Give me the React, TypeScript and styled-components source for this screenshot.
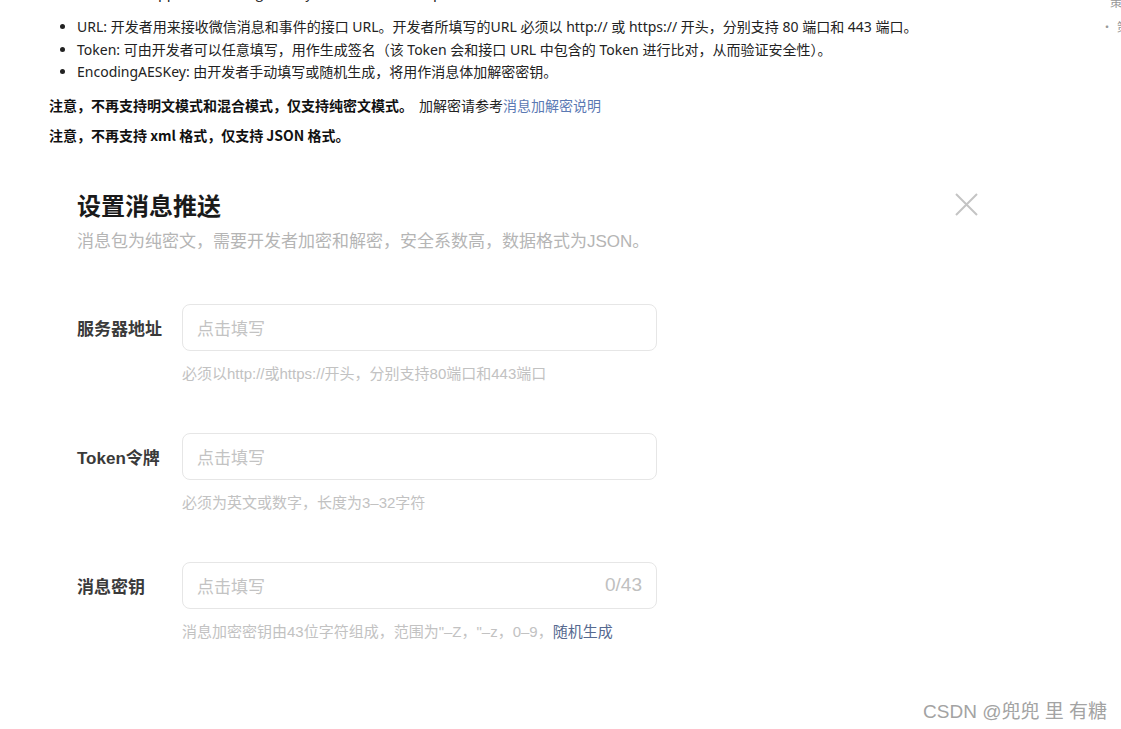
import styled, { createGlobalStyle } from 'styled-components'

const GlobalStyle = createGlobalStyle`
  html, body {
    margin: 0;
    padding: 0;
    background: #fff;
    overflow: hidden;
  }
  body {
    font-family: "Noto Sans CJK SC", sans-serif;
    color: #222;
  }
`

const Page = styled.div`
  position: relative;
  display: flex;
  width: 1121px;
  height: 729px;
  overflow: hidden;
  background: #fff;
`

const Article = styled.main`
  width: 1052px;
  flex-shrink: 0;
  padding-left: 49px;
`

const Aside = styled.aside`
  display: flex;
  flex-direction: column;
  margin-top: -11px;
  color: #999;
  font-size: 12px;
  line-height: 25px;
  white-space: nowrap;
`

const AsideItem = styled.div<{ $dot?: boolean }>`
  padding-left: ${({ $dot }) => ($dot ? 0 : 9)}px;
  &::before {
    content: ${({ $dot }) => ($dot ? "'·'" : 'none')};
    margin-right: 4px;
  }
`

const TopLine = styled.p`
  margin: -19px 0 0;
  font-size: 14px;
  line-height: 22px;
  white-space: nowrap;
`

const BulletList = styled.ul`
  margin: 13px 0 0;
  padding-left: 28px;
  font-family: "Noto Sans", "Noto Sans CJK SC", sans-serif;
  font-size: 14px;
  line-height: 22.5px;
  list-style: disc;
  white-space: nowrap;
`

const Note = styled.p<{ $gap: number }>`
  margin: ${({ $gap }) => $gap}px 0 0;
  font-size: 14px;
  line-height: 22px;
  white-space: nowrap;
`

const Strong = styled.b`
  font-weight: 700;
  color: #111;
  margin-right: 6px;
`

const DocLink = styled.a`
  color: #5b79b3;
  text-decoration: none;
`

const Dialog = styled.section`
  width: 901px;
  margin: 45px 0 0 28px;
  font-family: "Liberation Sans", "Noto Sans CJK SC", sans-serif;
`

const Header = styled.div`
  display: flex;
  justify-content: space-between;
  align-items: flex-start;
`

const Title = styled.h2`
  margin: 0;
  font-size: 24px;
  line-height: 32px;
  font-weight: 700;
  color: #1a1a1a;
`

const Close = styled.button`
  margin-top: 2px;
  padding: 0;
  border: 0;
  background: none;
  width: 23px;
  height: 23px;
  display: flex;
`

const Subtitle = styled.p`
  margin: 7px 0 0;
  font-size: 17px;
  line-height: 24px;
  color: #b5b5b5;
`

const Form = styled.div`
  margin-top: 50px;
  display: flex;
  flex-direction: column;
  gap: 49px;
`

const Field = styled.div`
  display: grid;
  grid-template-columns: 105px 475px;
  row-gap: 12px;
  align-items: center;
`

const Label = styled.label`
  font-size: 17px;
  font-weight: 600;
  color: #3a3a3a;
`

const InputBox = styled.div`
  height: 47px;
  box-sizing: border-box;
  border: 1px solid #e6e6e6;
  border-radius: 8px;
  display: flex;
  align-items: center;
  justify-content: space-between;
  padding: 0 14px;
  font-size: 17px;
  color: #c3c3c3;
`

const Counter = styled.span`
  font-size: 19px;
  color: #c0c0c0;
`

const Hint = styled.div`
  grid-column: 2;
  font-size: 15px;
  line-height: 21px;
  color: #c2c2c2;
`

const HintLink = styled.span`
  color: #56698f;
`

const Watermark = styled.div`
  position: absolute;
  right: 14px;
  top: 699px;
  font-family: "Liberation Sans", "Noto Sans CJK SC", sans-serif;
  font-size: 19px;
  line-height: 26px;
  color: #a3a3a3;
  white-space: nowrap;
`

const fields = [
  { label: '服务器地址', hint: <>必须以http://或https://开头，分别支持80端口和443端口</> },
  { label: 'Token令牌', hint: <>必须为英文或数字，长度为3–32字符</> },
  {
    label: '消息密钥',
    count: '0/43',
    hint: (
      <>
        消息加密密钥由43位字符组成，范围为"–Z，"–z，0–9，<HintLink>随机生成</HintLink>
      </>
    ),
  },
]

export default function App() {
  return (
    <>
      <GlobalStyle />
      <Page>
        <Article>
          <TopLine>开发者需要填写 appId、EncodingAESKey、Token 和 URL 等 p 参数配置</TopLine>
          <BulletList>
            <li>URL: 开发者用来接收微信消息和事件的接口 URL。开发者所填写的URL 必须以 http:// 或 https:// 开头，分别支持 80 端口和 443 端口。</li>
            <li>Token: 可由开发者可以任意填写，用作生成签名（该 Token 会和接口 URL 中包含的 Token 进行比对，从而验证安全性）。</li>
            <li>EncodingAESKey: 由开发者手动填写或随机生成，将用作消息体加解密密钥。</li>
          </BulletList>
          <Note $gap={10}>
            <Strong>注意，不再支持明文模式和混合模式，仅支持纯密文模式。</Strong>
            加解密请参考<DocLink href="#">消息加解密说明</DocLink>
          </Note>
          <Note $gap={8}>
            <Strong>注意，不再支持 xml 格式，仅支持 JSON 格式。</Strong>
          </Note>

          <Dialog>
            <Header>
              <Title>设置消息推送</Title>
              <Close aria-label="关闭">
                <svg width="23" height="23" viewBox="0 0 23 23">
                  <path d="M1 1 L22 22 M22 1 L1 22" stroke="#c4c4c4" strokeWidth="2" fill="none" />
                </svg>
              </Close>
            </Header>
            <Subtitle>消息包为纯密文，需要开发者加密和解密，安全系数高，数据格式为JSON。</Subtitle>
            <Form>
              {fields.map(f => (
                <Field key={f.label}>
                  <Label>{f.label}</Label>
                  <InputBox>
                    <span>点击填写</span>
                    {f.count && <Counter>{f.count}</Counter>}
                  </InputBox>
                  <Hint>{f.hint}</Hint>
                </Field>
              ))}
            </Form>
          </Dialog>
        </Article>
        <Aside>
          <AsideItem>策</AsideItem>
          <AsideItem $dot>策</AsideItem>
        </Aside>
        <Watermark>CSDN @兜兜 里 有糖</Watermark>
      </Page>
    </>
  )
}
